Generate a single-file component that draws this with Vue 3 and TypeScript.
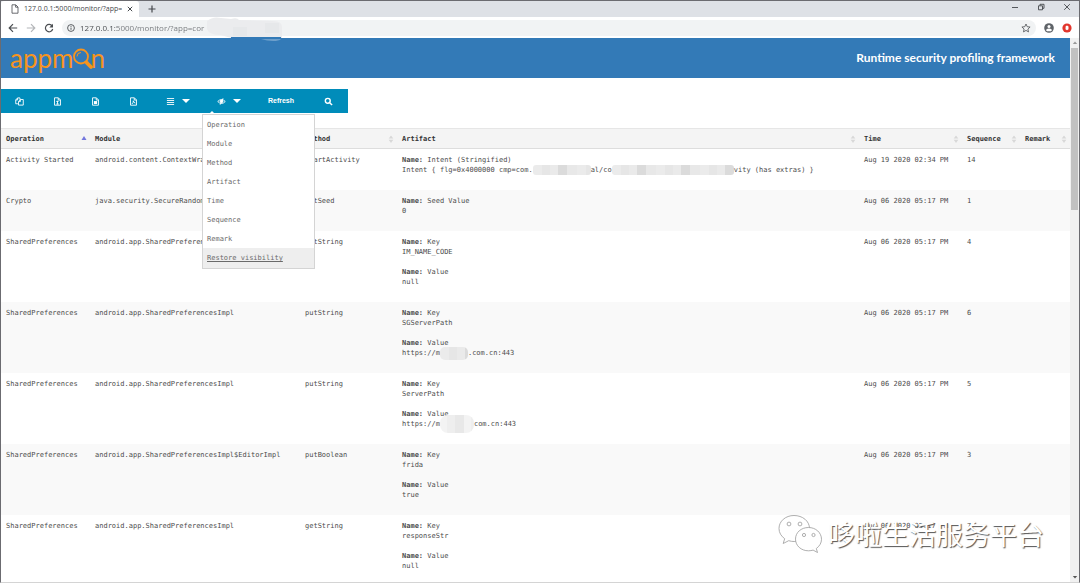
<script setup lang="ts">
import { ref } from 'vue'

interface Part { text?: string; mask?: string }
interface Field { name: string; value: Part[] }
interface Row { operation: string; module: string; method: string; fields: Field[]; time: string; sequence: number }

const address = ref('127.0.0.1:5000/monitor/?app=cor')
const columns = [
  { key: 'operation', label: 'Operation', sorted: true },
  { key: 'module', label: 'Module' },
  { key: 'method', label: 'Method' },
  { key: 'artifact', label: 'Artifact' },
  { key: 'time', label: 'Time' },
  { key: 'sequence', label: 'Sequence' },
  { key: 'remark', label: 'Remark' },
]
const spImpl = 'android.app.SharedPreferencesImpl'
const keyValue = (key: string, value: Part[]): Field[] => [
  { name: 'Key', value: [{ text: key }] },
  { name: 'Value', value },
]
const late = 'Aug 06 2020 05:17 PM'
const rows: Row[] = [
  {
    operation: 'Activity Started', module: 'android.content.ContextWrapper', method: 'startActivity',
    fields: [{
      name: 'Intent (Stringified)',
      value: [
        { text: 'Intent { flg=0x4000000 cmp=com.' }, { mask: 'short' }, { text: 'al/co' },
        { mask: 'long' }, { text: 'vity (has extras) }' },
      ],
    }],
    time: 'Aug 19 2020 02:34 PM', sequence: 14,
  },
  { operation: 'Crypto', module: 'java.security.SecureRandom', method: 'setSeed', fields: [{ name: 'Seed Value', value: [{ text: '0' }] }], time: late, sequence: 1 },
  { operation: 'SharedPreferences', module: spImpl, method: 'getString', fields: keyValue('IM_NAME_CODE', [{ text: 'null' }]), time: late, sequence: 4 },
  { operation: 'SharedPreferences', module: spImpl, method: 'putString', fields: keyValue('SGServerPath', [{ text: 'https://m' }, { mask: 'host' }, { text: '.com.cn:443' }]), time: late, sequence: 6 },
  { operation: 'SharedPreferences', module: spImpl, method: 'putString', fields: keyValue('ServerPath', [{ text: 'https://m' }, { mask: 'host pale' }, { text: 'com.cn:443' }]), time: late, sequence: 5 },
  { operation: 'SharedPreferences', module: spImpl + '$EditorImpl', method: 'putBoolean', fields: keyValue('frida', [{ text: 'true' }]), time: late, sequence: 3 },
  { operation: 'SharedPreferences', module: spImpl, method: 'getString', fields: keyValue('responseStr', [{ text: 'null' }]), time: late, sequence: 7 },
]
const toggles = ['Operation', 'Module', 'Method', 'Artifact', 'Time', 'Sequence', 'Remark']
</script>

<template>
  <div class="window">
    <div class="tabs">
      <div class="tab">
        <svg class="page" viewBox="0 0 8 10"><path d="M1 .8h3.8L7 3v6.2H1zM4.6 1v2.2H7" /></svg>
        <span class="title">127.0.0.1:5000/monitor/?app=</span>
        <button class="bare" aria-label="Close tab"><svg class="x" viewBox="0 0 6 6"><path d="M.8.8l4.4 4.4M5.2.8L.8 5.2" /></svg></button>
      </div>
      <button class="bare new" aria-label="New tab"><svg class="plus" viewBox="0 0 8 8"><path d="M4 .5v7M.5 4h7" /></svg></button>
      <div class="controls">
        <button class="bare" aria-label="Minimize"><svg viewBox="0 0 8 8"><path d="M1 4.5h6" /></svg></button>
        <button class="bare" aria-label="Restore"><svg viewBox="0 0 8 8"><path d="M1.5 2.8h4v4h-4zM3 2.6V1.3h4v4H5.6" /></svg></button>
        <button class="bare" aria-label="Close window"><svg viewBox="0 0 8 8"><path d="M1.2 1.2l5.6 5.6M6.8 1.2L1.2 6.8" /></svg></button>
      </div>
    </div>

    <div class="nav">
      <button class="bare" aria-label="Back"><svg viewBox="0 0 10 10"><path d="M9.2 5H1.4M5 1.2L1.2 5 5 8.8" /></svg></button>
      <button class="bare off" aria-label="Forward"><svg viewBox="0 0 10 10"><path d="M.8 5h7.8M5 1.2L8.8 5 5 8.8" /></svg></button>
      <button class="bare" aria-label="Reload"><svg viewBox="0 0 10 10"><path d="M8.2 3A3.7 3.7 0 1 0 8.7 6" /><path class="solid" d="M9 .8v3.7H5.3z" /></svg></button>
      <div class="address">
        <svg class="info" viewBox="0 0 8 8"><circle cx="4" cy="4" r="3.4" /><path d="M4 3.6v2.2M4 2v.9" /></svg>
        <input v-model="address" aria-label="Address" />
        <svg class="star" viewBox="0 0 10 10"><path d="M5 1l1.2 2.7 2.9.3L6.900 6l.6 2.900L5 7.400 2.500 8.900 3.100 6 .9 4l2.900-.3z" /></svg>
        <svg class="smudge" viewBox="0 0 76 25">
          <path fill="#ebecee" d="M0 4Q6-1 14 1L24 2Q30 0 32 3L66 4Q75 4 75 10V21H24L14 18Q2 18 0 12z" />
          <path fill="#e6e8ea" d="M26 10h14v9H26zM58 6h14v10H58z" />
          <path fill="#337ab7" d="M24 20h50v2H24z" />
          <path fill="#6d9fcb" d="M54 22h20q-2 2-8 2t-12-2z" />
        </svg>
      </div>
      <svg class="user" viewBox="0 0 10 10"><circle cx="5" cy="5" r="4.800" fill="#5f6368" /><circle cx="5" cy="3.500" r="1.500" fill="#fff" /><path d="M1.900 6.900Q5 4.300 8.100 6.900L7 8.200H3z" fill="#fff" /></svg>
      <svg class="user" viewBox="0 0 10 10"><circle cx="5" cy="5" r="4.600" fill="#e2362d" /><path d="M3.700 3.200L5 2.600l1.500.8v2.800L5 7.200 3.500 6.200z" fill="#fff" /></svg>
    </div>

    <div class="viewport">
      <main>
        <header>
          <div class="logo" role="img" aria-label="appmon">
            <span>appm</span>
            <svg viewBox="0 0 22 24"><circle cx="9" cy="10.500" r="7" fill="none" stroke="#f7941d" stroke-width="1.800" /><path d="M5 10.500a4 4 0 0 1 4-4" fill="none" stroke="#f7941d" /><path d="M14.500 16.500l4.500 4.500" stroke="#f7941d" stroke-width="3.800" stroke-linecap="round" /></svg>
            <span class="n">n</span>
          </div>
          <h1>Runtime security profiling framework</h1>
        </header>

        <div class="toolbar">
          <button class="copy" aria-label="Copy"><svg viewBox="0 0 10 10"><path d="M3.200 7.500H.8V3.300L2.900 1h2.600v2M2.900 1v2.300H.8M3.900 9V5l2-2.200h3.300V9zM6 3v2.100H4" /></svg></button>
          <button aria-label="CSV"><svg viewBox="0 0 10 10"><path d="M1.700.9h4.300l2.300 2.300v5.900H1.700zM5.800 1v2.400h2.400M5 4.200v4M3.600 4.900h2.600M3.600 7.800h2.800" /></svg></button>
          <button aria-label="Excel"><svg viewBox="0 0 10 10"><path d="M1.700.9h4.300l2.300 2.300v5.900H1.700zM5.800 1v2.400h2.400" /><path class="solid" d="M3.200 4.500h3.600v3.300H3.200z" /></svg></button>
          <button aria-label="PDF"><svg viewBox="0 0 10 10"><path d="M1.700.9h4.300l2.300 2.300v5.900H1.700zM5.800 1v2.400h2.400M3.200 7.800Q5 6.500 4.800 4.200Q5.200 6.500 7 6.700" /></svg></button>
          <button class="drop" aria-label="Page length"><svg viewBox="0 0 10 10"><path d="M1 1.700h8M1 3.900h8M1 6.100h8M1 8.300h8" /></svg><i /></button>
          <div class="visibility">
            <button class="drop" aria-label="Column visibility" aria-expanded="true"><svg viewBox="0 0 10 10"><path d="M.8 5Q5 .6 9.200 5Q5 9.400.8 5z" /><circle cx="5" cy="4.800" r="1.500" class="dot" /><path d="M3.500 8.500L6.700 1.500" /></svg><i /></button>
            <div class="menu">
              <button v-for="t in toggles" :key="t">{{ t }}</button>
              <button class="restore">Restore visibility</button>
            </div>
          </div>
          <button class="refresh">Refresh</button>
          <button class="find" aria-label="Search"><svg viewBox="0 0 10 10"><circle cx="4.200" cy="4.200" r="2.700" class="lens" /><path class="lens" d="M6.300 6.300L9 9" /></svg></button>
        </div>

        <table>
          <colgroup><col v-for="c in columns" :key="c.key" :class="c.key" /></colgroup>
          <thead>
            <tr>
              <th v-for="c in columns" :key="c.key" scope="col">
                <div class="head">
                  {{ c.label }}
                  <svg viewBox="0 0 6 8"><path v-if="c.sorted" fill="#7377dd" d="M3 1l2.500 4h-5z" /><path v-else fill="#d8d8d8" d="M3 .5l2.300 3H.7zM3 8L.7 4.800h4.600z" /></svg>
                </div>
              </th>
            </tr>
          </thead>
          <tbody>
            <tr v-for="(r, i) in rows" :key="i">
              <td>{{ r.operation }}</td>
              <td>{{ r.module }}</td>
              <td>{{ r.method }}</td>
              <td>
                <div v-for="f in r.fields" :key="f.name" class="field">
                  <div><b>Name:</b> {{ f.name }}</div>
                  <div class="value"><template v-for="(p, k) in f.value" :key="k"><span v-if="p.mask" class="mask" :class="p.mask" /><template v-else>{{ p.text }}</template></template></div>
                </div>
              </td>
              <td>{{ r.time }}</td>
              <td>{{ r.sequence }}</td>
              <td></td>
            </tr>
          </tbody>
        </table>
      </main>
      <div class="scroll" aria-hidden="true">
        <svg viewBox="0 0 8 8"><path fill="#999" d="M4 2.500l2.200 2.500H1.800z" /></svg>
        <div class="track"><div class="thumb" /></div>
        <svg viewBox="0 0 8 8"><path fill="#555" d="M4 5.500L1.800 3h4.400z" /></svg>
      </div>
    </div>

    <div class="watermark">
      <svg viewBox="0 0 46 40">
        <g fill="#fff" stroke="#9a9a9a" stroke-width=".8">
          <path d="M16 1.500C7.500 1.500 1 7.200 1 14.500c0 4.300 2.200 7.700 5.700 10.200L5.200 29.500l5.500-2.800c2 .6 3.600.8 5.500.8 8.500 0 15.300-5.500 15.300-13S24.500 1.500 16 1.500z" />
          <path d="M30.500 13.500c-7.400 0-13 5-13 11.600s5.600 11.700 13 11.700c1.600 0 3.200-.3 4.600-.7l4.400 2.400-1.200-4c3.200-2.300 5.200-5.500 5.200-9.200 0-6.700-5.800-11.800-13-11.800z" />
          <circle cx="11" cy="10" r="1.900" /><circle cx="22" cy="10" r="1.900" /><circle cx="26" cy="21" r="1.600" /><circle cx="35.500" cy="21" r="1.600" />
        </g>
      </svg>
      <span>哆啦生活服务平台</span>
    </div>
  </div>
</template>

<style>
body { margin: 0; overflow: hidden; }
</style>

<style scoped>
* { box-sizing: border-box; }
.window { position: relative; display: flex; flex-direction: column; height: 100vh; border: 1px solid #6b6b70; border-bottom-color: #d4d4d4; background: #fff; font-family: "Open Sans", "Noto Sans", sans-serif; }
svg { display: block; fill: none; stroke: currentColor; flex: none; }
button { font: inherit; color: inherit; background: none; border: 0; padding: 0; display: flex; align-items: center; justify-content: center; }

.tabs { display: flex; align-items: center; height: 16px; background: #dee1e6; color: #45484c; flex: none; }
.tab { display: flex; align-items: center; align-self: stretch; width: 138px; padding-left: 10px; background: #fff; border-radius: 3px 3px 0 0; }
.page { width: 8px; height: 10px; stroke-width: .8; }
.title { width: 98px; margin: 0 5px; font-size: 7px; line-height: 14px; white-space: nowrap; overflow: hidden; }
.x { width: 6px; height: 6px; }
.new { margin-left: 9px; }
.plus { width: 8px; height: 8px; stroke-width: 1.2; }
.controls { display: flex; gap: 18px; margin-left: auto; padding: 0 8px 4px 0; }
.controls svg { width: 8px; height: 8px; stroke-width: .9; }

.nav { display: flex; align-items: center; gap: 8px; height: 21px; padding: 0 7px; background: #fff; color: #4b4e52; flex: none; }
.nav > button svg, .user { width: 10px; height: 10px; stroke-width: 1.2; }
.user { stroke: none; }
.off { color: #b4b6b9; }
.solid { fill: currentColor; stroke: none; }
.address { position: relative; flex: 1; display: flex; align-items: center; gap: 5px; height: 16px; padding: 0 5px; border-radius: 8px; background: #f1f3f4; }
.info { width: 8px; height: 8px; stroke-width: .9; }
.address input { flex: 1; min-width: 0; height: 16px; padding: 0; border: 0; outline: 0; font: 8px/16px "Open Sans", "Noto Sans", sans-serif; color: transparent; background: linear-gradient(90deg, #45484c 35px, #74777b 35px); background-clip: text; -webkit-background-clip: text; }
.star { width: 10px; height: 10px; stroke-width: .8; }
.smudge { position: absolute; left: 145px; top: -3px; width: 76px; height: 25px; stroke: none; z-index: 1; }

.viewport { flex: 1; min-height: 0; display: flex; }
main { flex: 1; min-width: 0; overflow: hidden; }
header { display: flex; align-items: center; justify-content: space-between; height: 40px; padding: 0 15px 0 9px; background: #337ab7; color: #fff; }
h1 { margin: 0; font: 700 12px/20px Lato, sans-serif; }
.logo { display: flex; align-items: center; color: #f7941d; font: 400 26px/34px Lato, sans-serif; }
.logo svg { width: 22px; height: 24px; margin: 0 -4px 0 -1px; stroke: none; }

.toolbar { display: flex; width: max-content; height: 24px; margin-top: 11px; background: #008cba; color: #fff; }
.toolbar > button { width: 38px; }
.toolbar > .copy { width: 37px; }
.toolbar svg { width: 9px; height: 9px; stroke-width: 1; }
.toolbar .drop { width: 51px; height: 24px; gap: 7px; }
.drop i { border: 4px solid transparent; border-top-color: #fff; border-bottom: 0; }
.dot { fill: currentColor; }
.lens { stroke-width: 1.6; }
.toolbar .refresh { width: 54px; font: 700 7px/10px "Liberation Sans", Arial, sans-serif; }
.toolbar .find { width: 40px; }
.visibility { position: relative; }
.menu { position: absolute; z-index: 2; top: 25px; left: -1px; width: 113px; border: 1px solid #d4d4d4; background: #fff; }
.menu::before { content: ""; position: absolute; top: -4px; left: 6px; border: 3px solid transparent; border-bottom-color: #fff; border-top: 0; }
.menu button { width: 100%; height: 19px; padding: 0 4px; justify-content: flex-start; color: #6a6a6a; font: 7px/10px "DejaVu Sans Mono", "Liberation Mono", monospace; }
.menu .restore { height: 20px; background: #eee; text-decoration: underline; }

table { width: 100%; margin-top: 15px; border-collapse: collapse; table-layout: fixed; color: #4c4c4c; font: 7px/10px "DejaVu Sans Mono", "Liberation Mono", monospace; }
.operation { width: 89px; }
.module { width: 210px; }
.method { width: 97px; }
.time { width: 103px; }
.sequence { width: 58px; }
.remark { width: 50px; }
th { height: 20px; padding: 0 3px 0 5px; border-top: 1px solid #e6e6e6; border-bottom: 1px solid #ddd; background: #f4f4f4; text-align: left; color: #333; }
.head { display: flex; align-items: center; justify-content: space-between; }
.head svg { width: 6px; height: 8px; stroke: none; }
td { padding: 6px 0 15px 5px; vertical-align: top; white-space: nowrap; }
tbody tr:nth-child(even) { background: #f9f9f9; }
.field + .field { margin-top: 10px; }
.value { display: flex; align-items: center; height: 10px; white-space: pre; }
.mask { flex: none; height: 10px; border-radius: 3px; background: repeating-linear-gradient(90deg, #ebebeb 0 9px, #e6e6e6 9px 17px, #eaeaea 17px 25px, #dbdbdb 25px 34px, #e8e8e8 34px 44px); }
.short { width: 58px; }
.long { width: 122px; }
.host { width: 28px; height: 13px; border-radius: 5px; }
.pale { width: 34px; height: 18px; border-radius: 8px; background: repeating-linear-gradient(90deg, #f3f3f3 0 7px, #eee 7px 15px, #e8e8e8 15px 24px); }

.scroll { display: flex; flex-direction: column; align-items: center; width: 9px; background: #f1f1f1; }
.scroll svg { width: 8px; height: 10px; stroke: none; }
.track { flex: 1; width: 7px; }
.thumb { height: 31%; background: #c1c1c1; }

.watermark { position: absolute; right: 35px; bottom: 28px; display: flex; align-items: center; gap: 4px; z-index: 3; pointer-events: none; }
.watermark svg { width: 46px; height: 40px; }
.watermark span { font: 400 27px/40px "Noto Sans CJK SC", sans-serif; color: #fff; text-shadow: 1px 1px 1px #555; }
</style>
